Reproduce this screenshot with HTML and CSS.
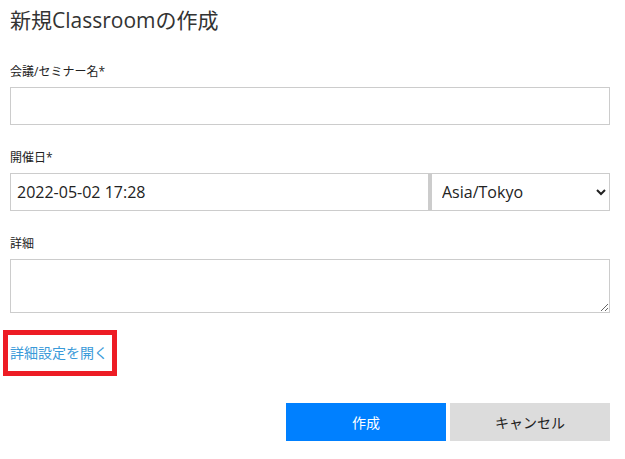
FILE: index.html
```html
<!DOCTYPE html>
<html lang="ja">
<head>
    <meta charset="UTF-8">
    <title>新規Classroomの作成</title>
    <link rel="stylesheet" href="styles.css">
</head>
<body>
    <div class="contenedor">
        <h1>新規Classroomの作成</h1>

        <div class="campo">
            <label>会議/セミナー名*</label>
            <input type="text" class="entrada">
        </div>

        <div class="campo">
            <label>開催日*</label>
            <div class="fila-fecha">
                <input type="text" class="entrada fecha" value="2022-05-02 17:28">
                <select class="zona">
                    <option>Asia/Tokyo</option>
                </select>
            </div>
        </div>

        <div class="campo">
            <label>詳細</label>
            <textarea class="detalle"></textarea>
        </div>

        <div class="enlace-marco">
            <a href="#" class="enlace">詳細設定を開く</a>
        </div>

        <div class="botones">
            <button class="boton">作成</button>
            <button class="boton-cancelar">キャンセル</button>
        </div>
    </div>
</body>
</html>
```

FILE: styles.css
```css
/* Estilo general */
body {
    font-family: "Open Sans", "Noto Sans CJK JP", sans-serif;
    margin: 0;
    padding: 0;
    background-color: #fff;
    color: #333;
}

.contenedor {
    width: 600px;
    padding: 6px 0 0 10px;
}

h1 {
    font-size: 21px;
    font-weight: normal;
    line-height: 28px;
    margin: 0 0 30px;
    color: #333;
}

.campo {
    margin-bottom: 25px;
}

label {
    display: block;
    font-size: 12px;
    line-height: 16px;
    margin-bottom: 7px;
    color: #222;
}

.entrada {
    display: block;
    box-sizing: border-box;
    width: 100%;
    height: 38px;
    border: 1px solid #ccc;
    padding: 0 6px;
    font-family: "Open Sans", "Noto Sans CJK JP", sans-serif;
    font-size: 16px;
    color: #222;
    outline: none;
}

.fila-fecha {
    display: flex;
}

.fila-fecha .fecha {
    width: 420px;
    border-right: 2px solid #ccc;
}

.zona {
    box-sizing: border-box;
    width: 180px;
    height: 38px;
    border: 1px solid #ccc;
    border-left: 2px solid #ccc;
    border-radius: 0;
    background-color: #fff;
    padding: 0 6px;
    font-family: "Open Sans", "Noto Sans CJK JP", sans-serif;
    font-size: 16px;
    color: #222;
}

.detalle {
    display: block;
    box-sizing: border-box;
    width: 100%;
    height: 54px;
    border: 1px solid #ccc;
    border-radius: 0;
    margin: 2px 0 0;
    resize: vertical;
}

/* Marco rojo alrededor del enlace */
.enlace-marco {
    display: inline-block;
    margin: -8px 0 0 -7px;
    padding: 6px 4px 8px 2px;
    border: 5px solid #ed1c24;
}

.enlace {
    font-size: 14px;
    line-height: 19px;
    color: #3a9ad9;
    text-decoration: none;
}

.botones {
    display: flex;
    justify-content: flex-end;
    gap: 4px;
    margin-top: 27px;
}

.boton,
.boton-cancelar {
    width: 160px;
    height: 38px;
    border: none;
    border-radius: 0;
    font-family: "Open Sans", "Noto Sans CJK JP", sans-serif;
    font-size: 14px;
    cursor: pointer;
}

.boton {
    background-color: #0080ff;
    color: #fff;
}

.boton-cancelar {
    background-color: #dcdcdc;
    color: #222;
}
```
